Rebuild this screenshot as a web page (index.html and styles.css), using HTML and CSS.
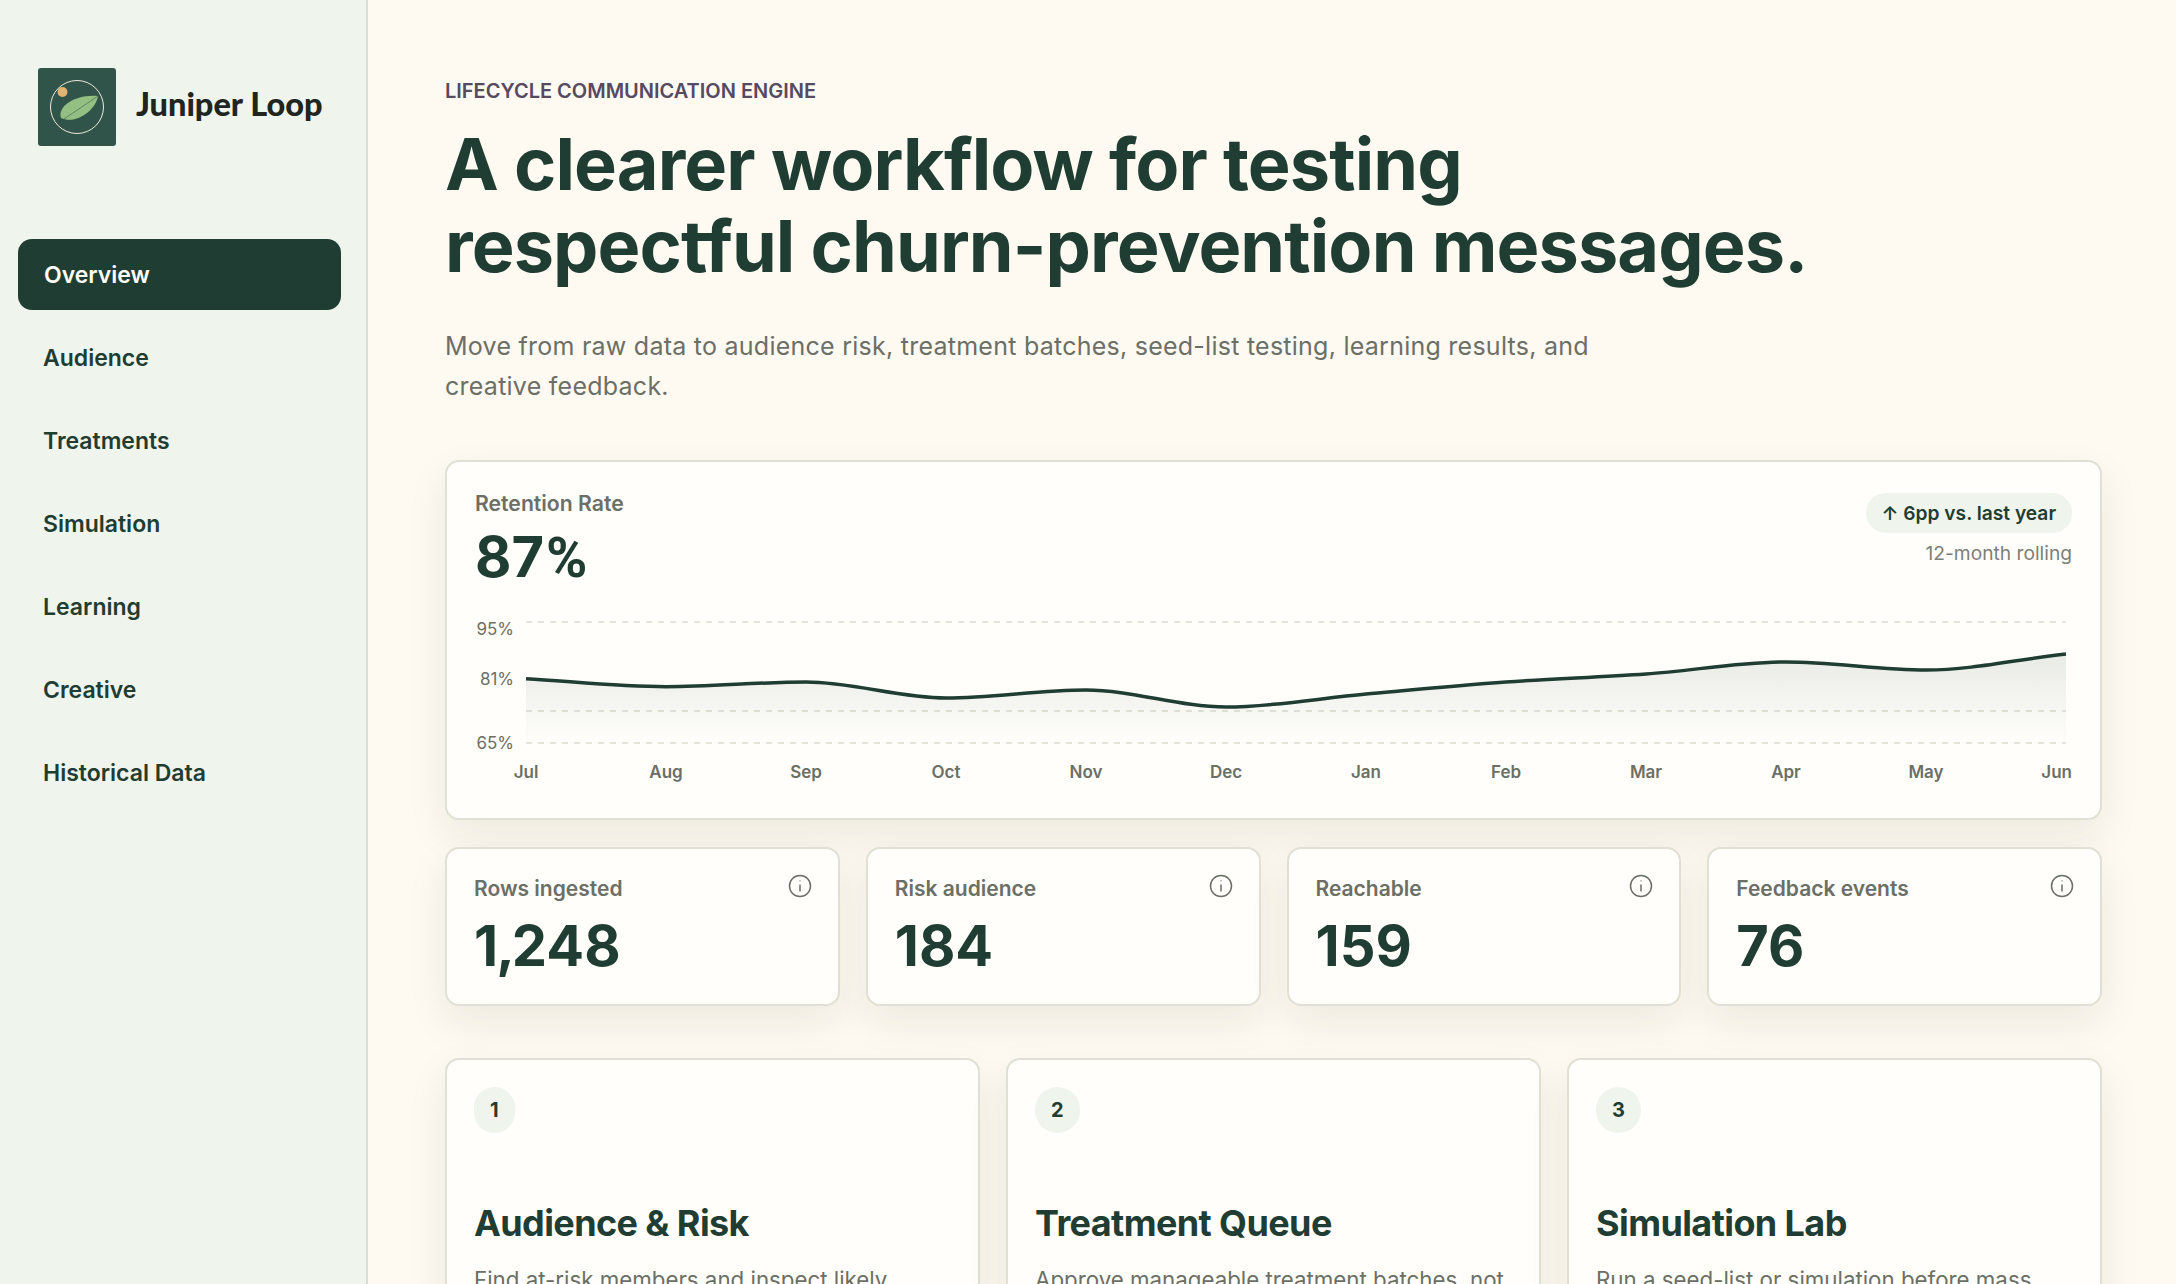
FILE: index.html
```html
<!DOCTYPE html>
<html lang="en">
<head>
  <meta charset="UTF-8">
  <meta name="viewport" content="width=device-width, initial-scale=1.0">
  <title>Juniper Loop</title>
  <link rel="stylesheet" href="styles.css">
</head>
<body>
  <div class="app">
    <!-- Sidebar -->
    <aside class="sidebar">
      <div class="brand">
        <svg class="brand-mark" viewBox="0 0 78 78">
          <rect width="78" height="78" rx="3" fill="#30544a"/>
          <circle cx="39" cy="39" r="26.5" fill="none" stroke="#eee9dc" stroke-width="1"/>
          <path d="M23 50C19 38 38 26 60 28C58 42 38 57 23 50Z" fill="#93bf82"/>
          <path d="M26 51L60 28" fill="none" stroke="#4f7a58" stroke-width="0.8"/>
          <circle cx="24.500" cy="24" r="5" fill="#e5b36f"/>
        </svg>
        <div class="brand-name">Juniper Loop</div>
      </div>
      <nav class="nav">
        <a class="active" href="#">Overview</a>
        <a href="#">Audience</a>
        <a href="#">Treatments</a>
        <a href="#">Simulation</a>
        <a href="#">Learning</a>
        <a href="#">Creative</a>
        <a href="#">Historical Data</a>
      </nav>
    </aside>

    <main class="content">
      <div class="eyebrow">Lifecycle communication engine</div>
      <h1>A clearer workflow for testing respectful churn-prevention messages.</h1>
      <p class="lead">Move from raw data to audience risk, treatment batches, seed-list testing, learning results, and creative feedback.</p>

      <!-- Retention chart -->
      <section class="card chart-card">
        <div class="chart-head">
          <div>
            <div class="card-label">Retention Rate</div>
            <div class="big-number">87<span class="pct">%</span></div>
          </div>
          <div class="chart-meta">
            <div class="pill">↑ 6pp vs. last year</div>
            <div class="rolling">12-month rolling</div>
          </div>
        </div>
        <svg class="chart" viewBox="0 0 1597 180">
          <defs>
            <linearGradient id="areaFill" x1="0" y1="0" x2="0" y2="1">
              <stop offset="0" stop-color="#1f3d32" stop-opacity="0.1"/>
              <stop offset="1" stop-color="#1f3d32" stop-opacity="0"/>
            </linearGradient>
          </defs>
          <g class="grid">
            <line x1="51" y1="12" x2="1591" y2="12"/>
            <line x1="51" y1="101" x2="1591" y2="101"/>
            <line x1="51" y1="133" x2="1591" y2="133"/>
          </g>
          <path fill="url(#areaFill)" d="M51,68.7C97.7,71.5 144.3,76.7 191,76.7C237.7,76.7 284.3,72 331,72C377.7,72 424.3,88 471,88C517.7,88 564.3,80 611,80C657.700,80 704.3,97 751,97C797.7,97 844.3,88.2 891,84C937.7,79.8 984.3,75.3 1031,72C1077.7,68.7 1124.3,67.3 1171,64C1217.7,60.7 1264.3,52 1311,52C1357.7,52 1404.3,60 1451,60C1497.7,60 1544.3,49 1591,44L1591,133L51,133Z"/>
          <path class="line" d="M51,68.7C97.7,71.5 144.3,76.7 191,76.7C237.7,76.7 284.3,72 331,72C377.7,72 424.3,88 471,88C517.7,88 564.3,80 611,80C657.700,80 704.3,97 751,97C797.7,97 844.3,88.2 891,84C937.7,79.8 984.3,75.3 1031,72C1077.7,68.7 1124.3,67.3 1171,64C1217.7,60.7 1264.3,52 1311,52C1357.7,52 1404.3,60 1451,60C1497.7,60 1544.3,49 1591,44"/>
          <g class="y-labels">
            <text x="39" y="25">95%</text>
            <text x="39" y="75">81%</text>
            <text x="39" y="139">65%</text>
          </g>
          <g class="x-labels">
            <text x="51" y="168">Jul</text>
            <text x="191" y="168">Aug</text>
            <text x="331" y="168">Sep</text>
            <text x="471" y="168">Oct</text>
            <text x="611" y="168">Nov</text>
            <text x="751" y="168">Dec</text>
            <text x="891" y="168">Jan</text>
            <text x="1031" y="168">Feb</text>
            <text x="1171" y="168">Mar</text>
            <text x="1311" y="168">Apr</text>
            <text x="1451" y="168">May</text>
            <text class="last" x="1597" y="168">Jun</text>
          </g>
        </svg>
      </section>

      <!-- Stats -->
      <section class="stats">
        <div class="card stat">
          <div class="stat-top">
            <span class="card-label">Rows ingested</span>
            <svg class="info" viewBox="0 0 24 24"><circle cx="12" cy="12" r="10.500"/><path d="M12 10.500v7M12 6.500v.8"/></svg>
          </div>
          <div class="big-number">1<span class="comma">,</span>248</div>
        </div>
        <div class="card stat">
          <div class="stat-top">
            <span class="card-label">Risk audience</span>
            <svg class="info" viewBox="0 0 24 24"><circle cx="12" cy="12" r="10.500"/><path d="M12 10.500v7M12 6.500v.8"/></svg>
          </div>
          <div class="big-number">184</div>
        </div>
        <div class="card stat">
          <div class="stat-top">
            <span class="card-label">Reachable</span>
            <svg class="info" viewBox="0 0 24 24"><circle cx="12" cy="12" r="10.500"/><path d="M12 10.500v7M12 6.500v.8"/></svg>
          </div>
          <div class="big-number">159</div>
        </div>
        <div class="card stat">
          <div class="stat-top">
            <span class="card-label">Feedback events</span>
            <svg class="info" viewBox="0 0 24 24"><circle cx="12" cy="12" r="10.500"/><path d="M12 10.500v7M12 6.500v.8"/></svg>
          </div>
          <div class="big-number">76</div>
        </div>
      </section>

      <!-- Workflow steps -->
      <section class="steps">
        <div class="card step">
          <span class="step-num">1</span>
          <h2>Audience &amp; Risk</h2>
          <p>Find at-risk members and inspect likely churn drivers.</p>
        </div>
        <div class="card step">
          <span class="step-num">2</span>
          <h2>Treatment Queue</h2>
          <p>Approve manageable treatment batches, not one-off sends.</p>
        </div>
        <div class="card step">
          <span class="step-num">3</span>
          <h2>Simulation Lab</h2>
          <p>Run a seed-list or simulation before mass delivery.</p>
        </div>
      </section>
    </main>
  </div>
</body>
</html>
```

FILE: styles.css
```css
html, body {
  height: 100%;
}

body {
  margin: 0;
  overflow: hidden;
  font-family: Inter, "Liberation Sans", sans-serif;
  background-color: #fef9f1;
  color: #1f3d32;
}

.app {
  display: flex;
  height: 100%;
}

/* Sidebar */
.sidebar {
  flex: 0 0 368px;
  box-sizing: border-box;
  padding: 68px 25px 0 18px;
  background-color: #eff4ed;
  border-right: 2px solid #d9dccf;
}

.brand {
  display: flex;
  align-items: center;
  gap: 20px;
  padding-left: 20px;
}

.brand-mark {
  width: 78px;
  height: 78px;
  flex: none;
}

.brand-name {
  padding-bottom: 8px;
  font-family: Lato, Inter, sans-serif;
  font-size: 32.500px;
  font-weight: 900;
  color: #20251f;
}

.nav {
  display: flex;
  flex-direction: column;
  gap: 12px;
  margin-top: 93px;
}

.nav a {
  display: flex;
  align-items: center;
  box-sizing: border-box;
  height: 71px;
  padding: 1px 0 0 25px;
  border-radius: 14px;
  font-size: 23px;
  font-weight: 600;
  color: #1f3d32;
  text-decoration: none;
}

.nav a.active {
  padding-left: 26px;
  background-color: #1f3d32;
  color: #fffdf7;
}

/* Main column */
.content {
  flex: 1;
  min-width: 0;
  padding: 78px 74px 0 77px;
}

.eyebrow {
  font-size: 20px;
  line-height: 26px;
  font-weight: 600;
  text-transform: uppercase;
  color: #554a60;
}

h1 {
  max-width: 1375px;
  margin: 19px 0 0;
  font-size: 72px;
  line-height: 82px;
  font-weight: 700;
  letter-spacing: -0.9px;
  font-variant-ligatures: none;
}

.lead {
  max-width: 1180px;
  margin: 39px 0 54px;
  font-size: 25px;
  line-height: 40px;
  letter-spacing: 0.25px;
  color: #6b6f66;
}

/* Cards */
.card {
  box-sizing: border-box;
  background-color: #fffefa;
  border: 2px solid #e0e0d4;
  border-radius: 14px;
  box-shadow: 0 16px 40px rgba(60, 60, 30, 0.08);
}

.card-label {
  font-size: 21px;
  line-height: 26px;
  font-weight: 600;
  color: #6b6f66;
}

.big-number {
  font-size: 56px;
  line-height: 68px;
  font-weight: 700;
  color: #1f3d32;
}

.pct {
  margin-left: 2px;
  font-family: Roboto, Inter, sans-serif;
}

.comma {
  margin: 0 -3px 0 -2px;
}

.chart-card {
  height: 360px;
  padding: 28px 28px 0;
}

.chart-head {
  display: flex;
  justify-content: space-between;
  height: 120px;
}

.chart-head .card-label {
  font-size: 21.200px;
}

.chart-head .big-number {
  margin-top: 7px;
}

.chart-meta {
  display: flex;
  flex-direction: column;
  align-items: flex-end;
}

.pill {
  height: 40px;
  margin-top: 3px;
  padding: 0 16px;
  border-radius: 20px;
  background-color: #eff4ed;
  font-size: 19.200px;
  line-height: 40px;
  font-weight: 600;
  color: #1f3d32;
}

.rolling {
  margin-top: 7px;
  font-size: 19.200px;
  line-height: 26px;
  color: #7c8078;
}

.chart {
  display: block;
  width: 1597px;
  height: 180px;
}

.grid line {
  stroke: #dcdccf;
  stroke-width: 1.5;
  stroke-dasharray: 6 6;
}

.line {
  fill: none;
  stroke: #1f3d32;
  stroke-width: 3.5;
}

.y-labels text {
  font-size: 17px;
  fill: #6b6f66;
  text-anchor: end;
}

.x-labels text {
  font-size: 17px;
  font-weight: 600;
  fill: #6b6f66;
  text-anchor: middle;
}

.x-labels text.last {
  text-anchor: end;
}

/* Stats */
.stats {
  display: grid;
  grid-template-columns: repeat(4, 1fr);
  gap: 26px;
  margin-top: 27px;
}

.stat {
  height: 159px;
  padding: 24px 26px 0 27px;
}

.stat-top {
  display: flex;
  justify-content: space-between;
  align-items: flex-start;
  height: 34px;
  margin-bottom: 4px;
  padding-top: 1px;
}

.stat-top .card-label {
  padding-top: 2px;
}

.info {
  width: 24px;
  height: 24px;
  margin: 0;
  fill: none;
  stroke: #6b6f66;
  stroke-width: 1.500;
}

/* Steps */
.steps {
  display: grid;
  grid-template-columns: repeat(3, 1fr);
  gap: 26px;
  margin-top: 52px;
}

.step {
  height: 360px;
  padding: 27px 26px 0 27px;
}

.step-num {
  display: inline-block;
  height: 46px;
  padding: 0 16px;
  border-radius: 23px;
  background-color: #eff4ed;
  font-size: 20px;
  line-height: 46px;
  font-weight: 700;
}

.step h2 {
  margin: 67px 0 0;
  font-size: 36px;
  line-height: 46px;
  font-weight: 700;
  letter-spacing: -0.6px;
}

.step p {
  margin: 16px 0 0;
  font-size: 22.300px;
  line-height: 36px;
  color: #6b6f66;
}
```
